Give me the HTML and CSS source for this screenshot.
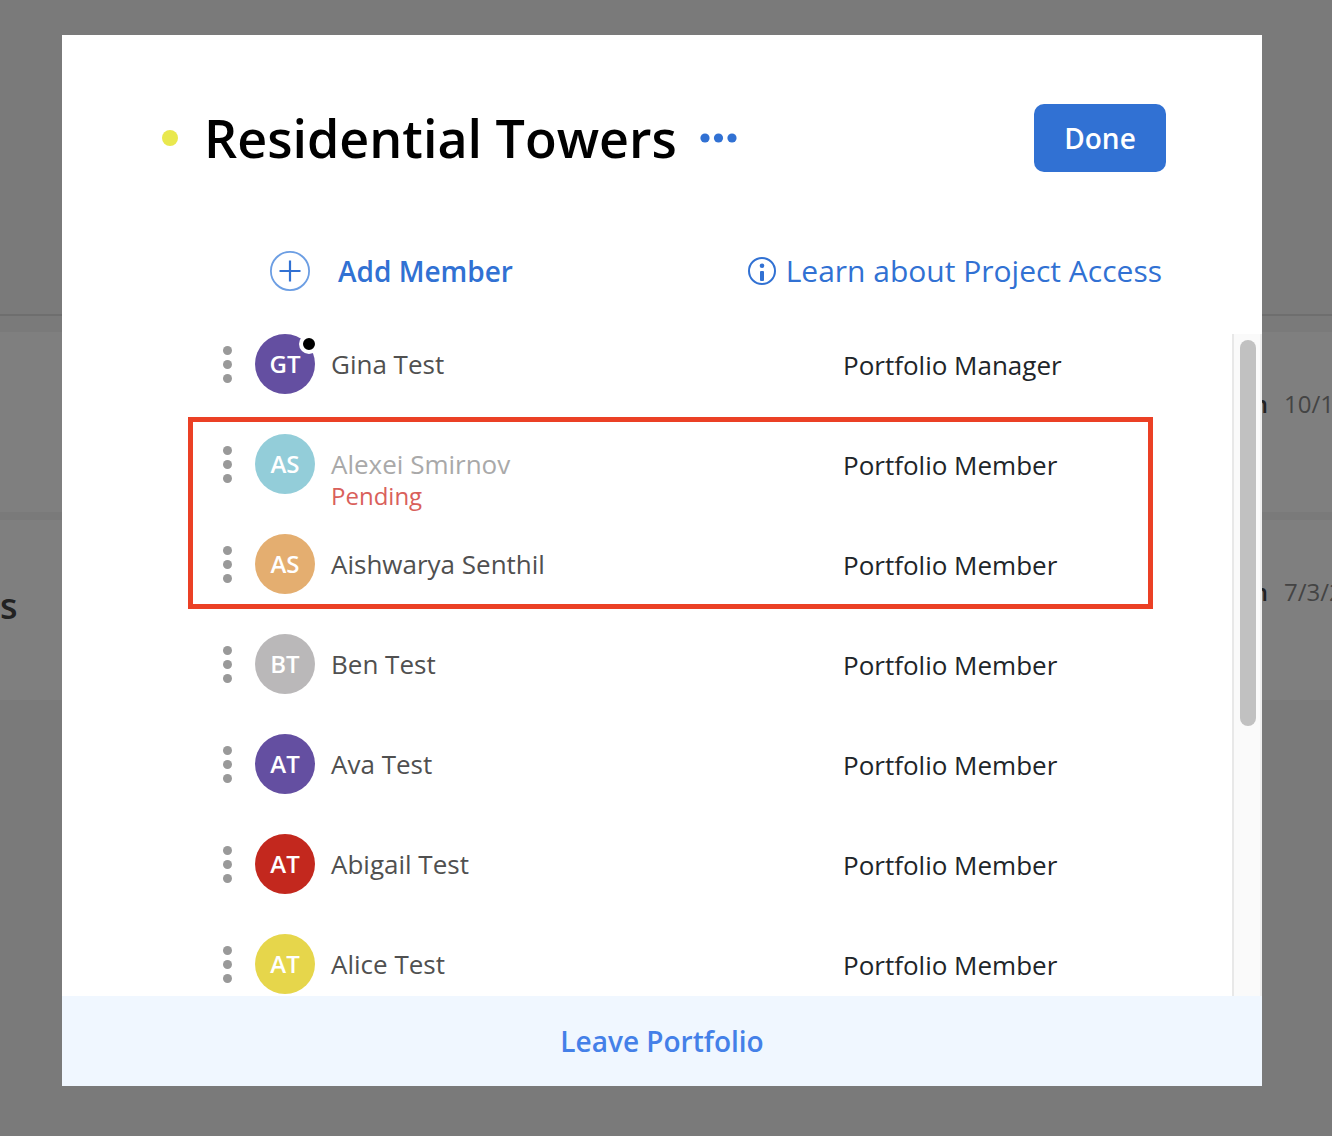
FILE: index.html
```
<!DOCTYPE html>
<html lang="en">
<head>
    <meta charset="UTF-8">
    <meta name="viewport" content="width=device-width, initial-scale=1.0">
    <title>Residential Towers</title>
    <link rel="stylesheet" href="styles.css">
</head>
<body>

    <!-- Portfolio page behind the dialog -->
    <main class="page">
        <div class="page-header"></div>
        <div class="project">
            <span class="project-title"></span>
            <span class="project-owner">n</span>
            <span class="project-date">10/1</span>
        </div>
        <div class="project">
            <span class="project-title">s</span>
            <span class="project-owner">n</span>
            <span class="project-date">7/3/2</span>
        </div>
    </main>

    <div class="overlay">
        <section class="modal" role="dialog" aria-labelledby="modal-title">
            <header class="modal-header">
                <span class="status-dot"></span>
                <h1 id="modal-title">Residential Towers</h1>
                <button type="button" class="more-btn" aria-label="More options">
                    <svg width="38" height="10" viewBox="0 0 38 10"><circle cx="5" cy="5" r="4.6"/><circle cx="18.5" cy="5" r="4.6"/><circle cx="32" cy="5" r="4.6"/></svg>
                </button>
                <button type="button" class="done-btn">Done</button>
            </header>

            <div class="toolbar">
                <button type="button" class="add-btn">
                    <svg width="40" height="40" viewBox="0 0 40 40">
                        <circle class="ring" cx="20" cy="20" r="19.1"/>
                        <path d="M20 9.5v21M9.5 20h21"/>
                    </svg>
                    Add Member
                </button>
                <a href="#" class="learn-link">
                    <svg width="28" height="28" viewBox="0 0 28 28">
                        <circle class="ring" cx="14" cy="14" r="13"/>
                        <circle cx="14" cy="8.7" r="2.3"/>
                        <rect x="12" y="14" width="4" height="10" rx="1"/>
                    </svg>
                    Learn about Project Access
                </a>
            </div>

            <div class="member-area">
                <div class="member-list">
                    <div class="member">
                        <button type="button" class="kebab" aria-label="Member options"><i></i><i></i><i></i></button>
                        <span class="avatar purple">GT<span class="badge"></span></span>
                        <div class="name">Gina Test</div>
                        <div class="role">Portfolio Manager</div>
                    </div>
                    <div class="highlight">
                        <div class="member">
                            <button type="button" class="kebab" aria-label="Member options"><i></i><i></i><i></i></button>
                            <span class="avatar blue">AS</span>
                            <div class="name pending">Alexei Smirnov<span class="state">Pending</span></div>
                            <div class="role">Portfolio Member</div>
                        </div>
                        <div class="member">
                            <button type="button" class="kebab" aria-label="Member options"><i></i><i></i><i></i></button>
                            <span class="avatar orange">AS</span>
                            <div class="name">Aishwarya Senthil</div>
                            <div class="role">Portfolio Member</div>
                        </div>
                    </div>
                    <div class="member">
                        <button type="button" class="kebab" aria-label="Member options"><i></i><i></i><i></i></button>
                        <span class="avatar gray">BT</span>
                        <div class="name">Ben Test</div>
                        <div class="role">Portfolio Member</div>
                    </div>
                    <div class="member">
                        <button type="button" class="kebab" aria-label="Member options"><i></i><i></i><i></i></button>
                        <span class="avatar purple">AT</span>
                        <div class="name">Ava Test</div>
                        <div class="role">Portfolio Member</div>
                    </div>
                    <div class="member">
                        <button type="button" class="kebab" aria-label="Member options"><i></i><i></i><i></i></button>
                        <span class="avatar red">AT</span>
                        <div class="name">Abigail Test</div>
                        <div class="role">Portfolio Member</div>
                    </div>
                    <div class="member">
                        <button type="button" class="kebab" aria-label="Member options"><i></i><i></i><i></i></button>
                        <span class="avatar yellow">AT</span>
                        <div class="name">Alice Test</div>
                        <div class="role">Portfolio Member</div>
                    </div>
                </div>
                <div class="scroll-track"><div class="scroll-thumb"></div></div>
            </div>

            <footer class="modal-footer">
                <button type="button" class="leave-btn">Leave Portfolio</button>
            </footer>
        </section>
    </div>

</body>
</html>
```
FILE: styles.css
```
* {
    box-sizing: border-box;
}
body {
    margin: 0;
    font-family: "Open Sans", "Noto Sans", sans-serif;
    font-size: 26px;
    background-color: #f5f5f5;
}
button {
    padding: 0;
    border: none;
    background: none;
    font-family: inherit;
    cursor: pointer;
}
svg {
    display: block;
    flex: none;
}

/* page behind */
.page {
    height: 100vh;
    overflow: hidden;
}
.page-header {
    height: 316px;
    margin-bottom: 16px;
    border-bottom: 2px solid #dcdcdc;
}
.project {
    display: flex;
    height: 180px;
    margin-bottom: 8px;
    padding-top: 56px;
    background-color: #fff;
    font-size: 24px;
    line-height: 32px;
    overflow: hidden;
}
.project-title {
    flex: 1;
    padding-top: 12px;
    font-size: 36px;
    line-height: 36px;
    font-weight: 600;
    color: #444;
}
.project-owner {
    font-weight: 600;
    color: #444;
}
.project-date {
    width: 48px;
    margin-left: 16px;
    color: #888;
}

/* dialog */
.overlay {
    position: fixed;
    inset: 0;
    display: flex;
    padding: 35px 70px 50px 62px;
    background-color: rgba(0, 0, 0, 0.5);
}
.modal {
    flex: 1;
    display: flex;
    flex-direction: column;
    min-height: 0;
    background-color: #fff;
}
.modal-header {
    display: flex;
    align-items: center;
    padding: 69px 96px 0 100px;
}
.status-dot {
    width: 16px;
    height: 16px;
    margin-right: 26px;
    border-radius: 50%;
    background-color: #e9e84e;
}
h1 {
    margin: 0;
    font-size: 52px;
    line-height: 68px;
    font-weight: 600;
    color: #000;
}
.more-btn {
    margin-left: 23px;
    fill: #3171d3;
}
.done-btn {
    width: 132px;
    height: 68px;
    margin-left: auto;
    border-radius: 10px;
    background-color: #3171d3;
    color: #fff;
    font-size: 28px;
    font-weight: 600;
}
.toolbar {
    display: flex;
    align-items: center;
    justify-content: space-between;
    padding: 79px 100px 43px 208px;
}
.add-btn {
    display: flex;
    align-items: center;
    gap: 28px;
    color: #3171d3;
    font-size: 28px;
    line-height: 40px;
    font-weight: 600;
}
.add-btn svg {
    fill: none;
    stroke: #3171d3;
    stroke-width: 2.2;
}
.add-btn .ring {
    stroke: #6c9ee3;
    stroke-width: 1.8;
}
.learn-link {
    display: flex;
    align-items: center;
    gap: 10px;
    color: #3171d3;
    font-size: 30px;
    line-height: 40px;
    text-decoration: none;
}
.learn-link svg {
    fill: #3171d3;
}
.learn-link .ring {
    fill: none;
    stroke: #3171d3;
    stroke-width: 2;
}

/* members */
.member-area {
    flex: 1;
    display: flex;
    min-height: 0;
}
.member-list {
    flex: 1;
    overflow: hidden;
}
.member {
    display: grid;
    grid-template-columns: 20px 60px 1fr 389px;
    align-items: start;
    height: 100px;
    padding-left: 155px;
}
.kebab {
    display: flex;
    flex-direction: column;
    align-items: center;
    justify-content: center;
    gap: 5px;
    height: 60px;
}
.kebab i {
    width: 9px;
    height: 9px;
    border-radius: 50%;
    background-color: #999;
}
.avatar {
    position: relative;
    width: 60px;
    height: 60px;
    margin-left: 18px;
    border-radius: 50%;
    color: #fff;
    font-size: 24px;
    line-height: 60px;
    font-weight: 600;
    text-align: center;
}
.badge {
    position: absolute;
    top: 0;
    right: -4px;
    width: 20px;
    height: 20px;
    border: 4px solid #fff;
    border-radius: 50%;
    background-color: #000;
}
.purple { background-color: #644fa1; }
.blue { background-color: #93cdd9; }
.orange { background-color: #e4ae70; }
.gray { background-color: #bab8b9; }
.red { background-color: #c3281e; }
.yellow { background-color: #e6d64b; }
.name {
    padding: 14px 0 0 34px;
    line-height: 32px;
    color: #505050;
}
.name.pending {
    color: #a9a9a9;
}
.state {
    display: block;
    font-size: 24px;
    color: #d9605b;
}
.role {
    padding-top: 15px;
    line-height: 32px;
    color: #212529;
}
/* red frame around the rows being pointed out */
.highlight {
    position: relative;
}
.highlight::after {
    content: "";
    position: absolute;
    top: -17px;
    right: 79px;
    bottom: 25px;
    left: 126px;
    border: 5px solid #eb4025;
    pointer-events: none;
}
.scroll-track {
    width: 30px;
    padding: 6px;
    border-left: 2px solid #e8e8e8;
    border-right: 2px solid #f0f0f0;
    background-color: #fafafa;
}
.scroll-thumb {
    width: 16px;
    height: 386px;
    border-radius: 8px;
    background-color: #c1c1c1;
}
.modal-footer {
    height: 90px;
    background-color: #f0f7ff;
}
.leave-btn {
    width: 100%;
    height: 100%;
    color: #4480e8;
    font-size: 28px;
    font-weight: 600;
}
```
